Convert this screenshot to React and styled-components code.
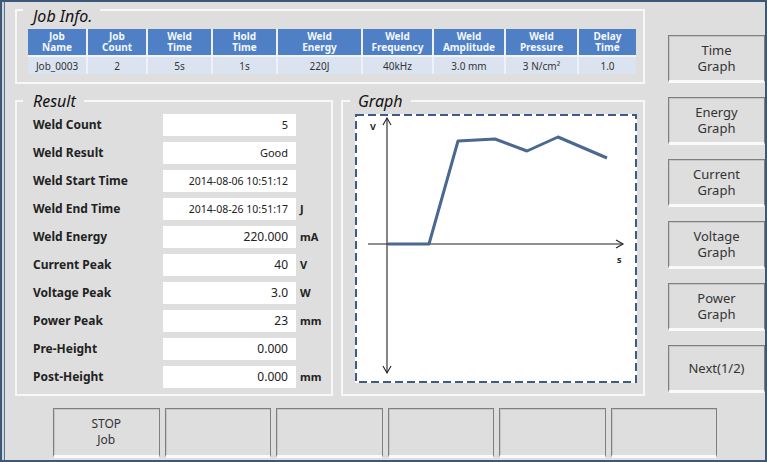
import React from "react";
import styled, { createGlobalStyle } from "styled-components";

const GlobalStyle = createGlobalStyle`
  html, body { margin: 0; padding: 0; background: #dedede; }
  body { font-family: "Noto Sans", "Liberation Sans", sans-serif; }
`;

const Frame = styled.div`
  width: 767px;
  height: 462px;
  box-sizing: border-box;
  border: 2px solid #3c5878;
  box-shadow: inset 2px 0 0 #cfd4db, inset 3px 0 0 #5d7391;
  background: #dedede;
  display: flex;
  flex-direction: column;
`;

const TopArea = styled.div`
  display: flex;
  height: 406px;
`;

const LeftCol = styled.div`
  margin-left: 13px;
  width: 630px;
  display: flex;
  flex-direction: column;
  gap: 9px;
`;

const Panel = styled.fieldset`
  margin: 0;
  min-width: 0;
  box-sizing: border-box;
  border: 2px solid #f7f7f7;
  padding: ${(p) => p.$pad};
  width: ${(p) => p.$w}px;
  display: flex;
  flex-direction: column;
`;

const Legend = styled.legend`
  margin-left: ${(p) => p.$ml}px;
  padding: 0 8px 0 ${(p) => p.$pl}px;
  font: italic 16px/16px "Noto Sans", sans-serif;
  color: #111;
  position: relative;
  top: ${(p) => p.$dy}px;
`;

const Table = styled.table`
  border-collapse: collapse;
  table-layout: fixed;
  width: 608px;
`;

const Col = styled.col`
  width: ${(p) => p.$w}px;
`;

const Th = styled.th`
  background: #4f80c5;
  color: #f4f7ff;
  font: bold 10px/11px "Noto Sans", sans-serif;
  height: 26px;
  padding: 0;
  text-align: center;
  border-left: 2px solid #eef1f7;
  border-bottom: 2px solid #f2f4f8;
  white-space: pre-line;
  &:first-child { border-left: none; }
`;

const Td = styled.td`
  background: #dbe3f1;
  color: #333;
  font: 10px/12px "Noto Sans", sans-serif;
  height: 17px;
  padding: 0;
  text-align: center;
  border-left: 2px solid #eef1f7;
  &:first-child { border-left: none; }
`;

const Lower = styled.div`
  display: flex;
  gap: 8px;
  height: 303px;
`;

const ResultList = styled.div`
  display: flex;
  flex-direction: column;
  gap: 6px;
`;

const Row = styled.div`
  display: grid;
  grid-template-columns: 130px 133px auto;
  align-items: center;
  height: 22px;
`;

const Label = styled.span`
  font: bold 12px/14px "Noto Sans", sans-serif;
  color: #222;
`;

const ValueBox = styled.div`
  height: 22px;
  background: #ffffff;
  display: flex;
  align-items: center;
  justify-content: flex-end;
  padding-right: 8px;
  font: ${(p) => p.$size}px/14px "Noto Sans", sans-serif;
  color: #222;
`;

const Unit = styled.span`
  margin-left: 4px;
  font: bold 11px/14px "Noto Sans", sans-serif;
  color: #222;
`;

const ChartBox = styled.div`
  width: 282px;
  height: 269px;
  background: #ffffff;
  display: flex;
`;

const RightCol = styled.div`
  margin-left: 23px;
  width: 97px;
  padding-top: 33px;
  display: flex;
  flex-direction: column;
  gap: 14px;
`;

const Key = styled.button`
  box-sizing: border-box;
  height: ${(p) => p.$h}px;
  margin: 0;
  padding: 0;
  background: #dedede;
  border: 1px solid #7f7f7f;
  border-bottom: 3px solid #fafafa;
  box-shadow: inset 1px 1px 0 #c6c6c6;
  font: ${(p) => p.$fs}px/16px "Noto Sans", sans-serif;
  color: #333;
  white-space: pre-line;
  text-align: center;
`;

const BottomBar = styled.div`
  display: grid;
  grid-template-columns: repeat(6, 106.5px);
  gap: 5px;
  padding-left: 51px;
  height: 50px;
`;

const cols = [59, 60, 65, 65, 85, 71, 72, 73, 58];
const heads = [
  "Job\nName", "Job\nCount", "Weld\nTime", "Hold\nTime", "Weld\nEnergy",
  "Weld\nFrequency", "Weld\nAmplitude", "Weld\nPressure", "Delay\nTime",
];
const data = ["Job_0003", "2", "5s", "1s", "220J", "40kHz", "3.0 mm", "3 N/cm²", "1.0"];

const results = [
  ["Weld Count", "5", 11, ""],
  ["Weld Result", "Good", 11, ""],
  ["Weld Start Time", "2014-08-06 10:51:12", 10.5, ""],
  ["Weld End Time", "2014-08-26 10:51:17", 10.5, "J"],
  ["Weld Energy", "220.000", 12, "mA"],
  ["Current Peak", "40", 12, "V"],
  ["Voltage Peak", "3.0", 12, "W"],
  ["Power Peak", "23", 12, "mm"],
  ["Pre-Height", "0.000", 12, ""],
  ["Post-Height", "0.000", 12, "mm"],
];

const sideKeys = ["Time\nGraph", "Energy\nGraph", "Current\nGraph", "Voltage\nGraph", "Power\nGraph", "Next(1/2)"];
const bottomKeys = ["STOP\nJob", "", "", "", "", ""];

function Chart() {
  return (
    <svg width="282" height="269" viewBox="0 0 282 269">
      <rect x="1" y="1" width="280" height="267" fill="#fff" stroke="#3e5b82" strokeWidth="2" strokeDasharray="8 4" />
      <g stroke="#222" strokeWidth="1.1" fill="none">
        <line x1="32" y1="4" x2="32" y2="259" />
        <polyline points="28,11 32,4 36,11" />
        <polyline points="28,252 32,259 36,252" />
        <line x1="13" y1="130" x2="268" y2="130" />
        <polyline points="261,126 268,130 261,134" />
      </g>
      <text x="15" y="16" fontSize="9" fontWeight="bold" fontFamily="Noto Sans, sans-serif" fill="#222">V</text>
      <text x="262" y="149" fontSize="9" fontWeight="bold" fontFamily="Noto Sans, sans-serif" fill="#222">s</text>
      <polyline
        points="33,130 74,130 103,27 140,25 172,37 203,23 252,44"
        fill="none"
        stroke="#4a6890"
        strokeWidth="3"
        strokeLinejoin="round"
      />
    </svg>
  );
}

export default function App() {
  return (
    <>
      <GlobalStyle />
      <Frame>
        <TopArea>
          <LeftCol>
            <Panel $w={630} $pad="11px 7px 8px 11px">
              <Legend $ml={-5} $pl={10} $dy={6}>Job Info.</Legend>
              <Table>
                <colgroup>
                  {cols.map((w, i) => (
                    <Col key={i} $w={w} />
                  ))}
                </colgroup>
                <thead>
                  <tr>
                    {heads.map((h) => (
                      <Th key={h}>{h}</Th>
                    ))}
                  </tr>
                </thead>
                <tbody>
                  <tr>
                    {data.map((d, i) => (
                      <Td key={i}>{d}</Td>
                    ))}
                  </tr>
                </tbody>
              </Table>
            </Panel>
            <Lower>
              <Panel $w={318} $pad="5px 4px 6px 16px">
                <Legend $ml={-10} $pl={10} $dy={0}>Result</Legend>
                <ResultList>
                  {results.map(([label, value, size, unit]) => (
                    <Row key={label}>
                      <Label>{label}</Label>
                      <ValueBox $size={size}>{value}</ValueBox>
                      <Unit>{unit}</Unit>
                    </Row>
                  ))}
                </ResultList>
              </Panel>
              <Panel $w={304} $pad="5px 6px 11px 12px">
                <Legend $ml={-5} $pl={8} $dy={0}>Graph</Legend>
                <ChartBox>
                  <Chart />
                </ChartBox>
              </Panel>
            </Lower>
          </LeftCol>
          <RightCol>
            {sideKeys.map((k) => (
              <Key key={k} $h={48} $fs={13}>{k}</Key>
            ))}
          </RightCol>
        </TopArea>
        <BottomBar>
          {bottomKeys.map((k, i) => (
            <Key key={i} $h={50} $fs={12}>{k}</Key>
          ))}
        </BottomBar>
      </Frame>
    </>
  );
}
